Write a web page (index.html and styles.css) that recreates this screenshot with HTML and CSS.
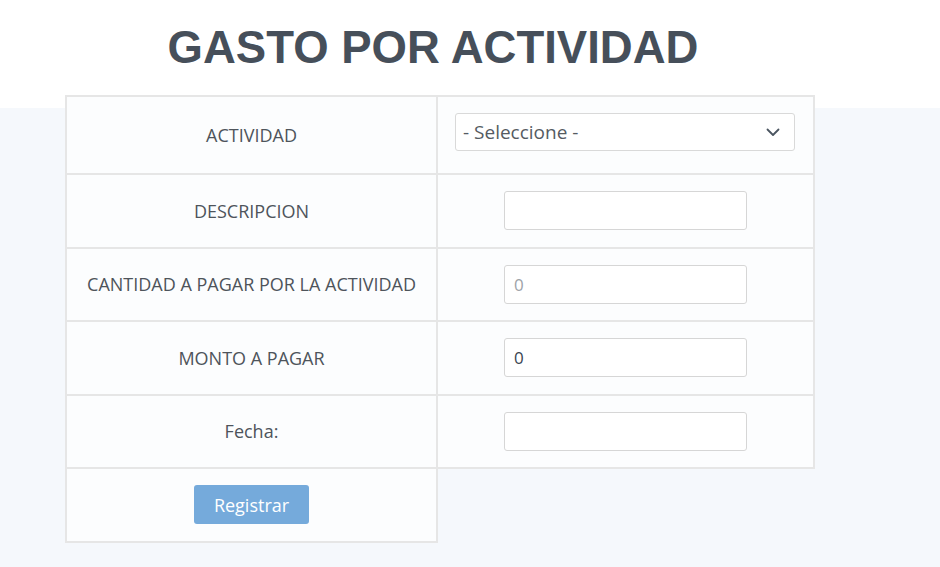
FILE: index.html
```html
<!DOCTYPE html>
<html lang="es">
<head>
<meta charset="utf-8">
<title>Gasto por actividad</title>
<link rel="stylesheet" href="styles.css">
</head>
<body>
<header class="top">
  <h1 class="title">GASTO POR ACTIVIDAD</h1>
</header>
<main class="content">
  <table class="form-table">
    <tr class="row-first">
      <td class="label">ACTIVIDAD</td>
      <td class="field field-select">
        <div class="select">
          <span class="select-text">- Seleccione -</span>
          <svg class="chevron" width="14" height="9" viewBox="0 0 14 9"><path d="M1.5 1.5 L7 7 L12.5 1.5" fill="none" stroke="#4a5560" stroke-width="1.8" stroke-linecap="round" stroke-linejoin="round"/></svg>
        </div>
      </td>
    </tr>
    <tr>
      <td class="label">DESCRIPCION</td>
      <td class="field"><input class="input" type="text"></td>
    </tr>
    <tr>
      <td class="label">CANTIDAD A PAGAR POR LA ACTIVIDAD</td>
      <td class="field"><input class="input" type="text" placeholder="0"></td>
    </tr>
    <tr>
      <td class="label">MONTO A PAGAR</td>
      <td class="field"><input class="input" type="text" value="0"></td>
    </tr>
    <tr>
      <td class="label">Fecha:</td>
      <td class="field"><input class="input" type="text"></td>
    </tr>
    <tr>
      <td class="label"><button class="btn" type="button">Registrar</button></td>
    </tr>
  </table>
</main>
</body>
</html>
```

FILE: styles.css
```css
html, body {
  margin: 0;
  padding: 0;
}
body {
  width: 940px;
  height: 567px;
  overflow: hidden;
  background: linear-gradient(#ffffff 0, #ffffff 108px, #f5f8fc 108px);
  font-family: "Open Sans", "Liberation Sans", sans-serif;
}
.top {
  padding-top: 22px;
}
.title {
  margin: 0;
  width: 866px;
  text-align: center;
  font-family: "Liberation Sans", Arial, sans-serif;
  font-weight: bold;
  font-size: 45.5px;
  line-height: 52px;
  color: #464f5a;
}
.content {
  padding: 21px 0 0 65px;
}
.form-table {
  border-collapse: collapse;
}
.form-table td {
  border: 2px solid #e6e6e6;
  padding: 0;
  vertical-align: middle;
  background: #fcfdfe;
}
.label {
  width: 369px;
  height: 71.5px;
  text-align: center;
  font-size: 18px;
  color: #4e545b;
}
.row-first .label {
  height: 76px;
}
.field {
  width: 375px;
  text-align: center;
}
.form-table .field-select {
  width: 340px;
  padding: 0 18px 0 17px;
}
.select {
  display: flex;
  align-items: center;
  justify-content: space-between;
  height: 36px;
  margin-top: -6px;
  padding: 0 14px 0 7px;
  border: 1px solid #d9d9d9;
  border-radius: 3px;
  background: #ffffff;
  font-size: 19px;
  color: #555b62;
  text-align: left;
}
.input {
  box-sizing: border-box;
  display: block;
  margin: 0 auto;
  width: 243px;
  height: 39px;
  padding: 0 9px;
  border: 1px solid #d6d6d6;
  border-radius: 3px;
  background: #ffffff;
  font-family: "Open Sans", "Liberation Sans", sans-serif;
  font-size: 17px;
  color: #3a4450;
}
.input::placeholder {
  color: #9ea3a8;
}
.btn {
  width: 115px;
  height: 39px;
  border: none;
  border-radius: 3px;
  background: #75aadb;
  color: #ffffff;
  font-family: "Open Sans", "Liberation Sans", sans-serif;
  font-size: 18px;
}
```
